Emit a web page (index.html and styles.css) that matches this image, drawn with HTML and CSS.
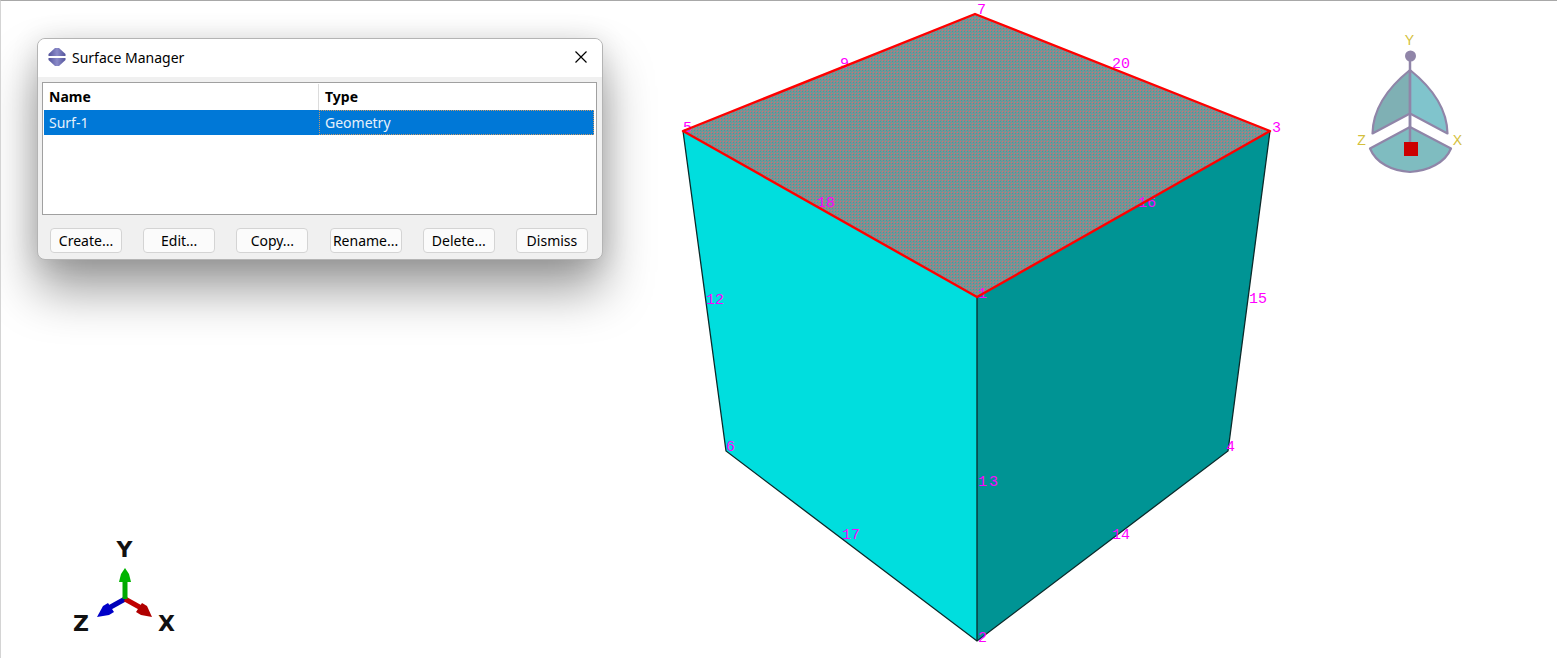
FILE: index.html
```html
<!DOCTYPE html>
<html lang="en">
<head>
<meta charset="utf-8">
<title>Surface Manager</title>
<link rel="stylesheet" href="styles.css">
</head>
<body>
<main class="viewport">
  <svg class="scene" width="1556" height="657" viewBox="1 1 1556 657" xmlns="http://www.w3.org/2000/svg">
    <defs>
      <pattern id="dither" width="3" height="3" patternUnits="userSpaceOnUse">
        <rect width="3" height="3" fill="#7d9192"/>
        <rect width="1" height="1" fill="#d66a72"/>
        <rect x="1" y="1" width="1" height="1" fill="#3d9fa0"/>
        <rect x="2" y="2" width="1" height="1" fill="#5aa0a0"/>
      </pattern>
    </defs>

    <polygon class="face-left" points="683,131 977,297 977,641 726,451"/>
    <polygon class="face-right" points="977,297 1270,131 1228,451 977,641"/>
    <polygon class="face-top" points="683,131 975,14 1270,131 977,297"/>
    <polyline class="edge" points="683,131 726,451 977,641 1228,451 1270,131"/>
    <line class="edge" x1="977" y1="297" x2="977" y2="641"/>

    <g class="labels">
      <text x="977" y="14">7</text>
      <text x="683" y="132">5</text>
      <text x="1272" y="132">3</text>
      <text x="978" y="298">1</text>
      <text x="726" y="451">6</text>
      <text x="1226" y="451">4</text>
      <text x="978" y="642">2</text>
      <text x="840" y="68">9</text>
      <text x="1112" y="68">20</text>
      <text x="817" y="207">18</text>
      <text x="1138" y="207">16</text>
      <text x="706" y="304">12</text>
      <text x="1249" y="303">15</text>
      <text class="label-wide" x="978" y="486">13</text>
      <text x="842" y="539">17</text>
      <text x="1112" y="539">14</text>
    </g>
    <polygon class="outline-red" points="683,131 975,14 1270,131 977,297"/>

    <g class="compass">
      <line class="compass-line" x1="1410" y1="56" x2="1410" y2="148"/>
      <circle class="compass-knob" cx="1410.5" cy="56" r="5.5"/>
      <path class="petal-left" d="M1410 70 C1390 86 1373 108 1372.5 133.5 L1410 113.5 Z"/>
      <path class="petal-right" d="M1410 70 C1430 86 1447 108 1447.5 133.5 L1410 113.5 Z"/>
      <path class="petal-low" d="M1410 127 L1370 148.5 C1376 163 1392 171 1410 172 C1428 171 1445 163 1451 148.5 Z"/>
      <line class="compass-line" x1="1410" y1="70" x2="1410" y2="148"/>
      <rect class="compass-red" x="1404" y="142" width="14" height="14"/>
      <text class="compass-text" x="1409.5" y="45">Y</text>
      <text class="compass-text" x="1361.5" y="145">Z</text>
      <text class="compass-text" x="1457.5" y="145">X</text>
    </g>

    <g class="triad">
      <line class="axis-blue" x1="125" y1="599" x2="107" y2="609"/>
      <polygon class="head-blue" points="97,617 103,606 108,603 114,612 109,615"/>
      <line class="axis-red" x1="125" y1="599" x2="143" y2="609"/>
      <polygon class="head-red" points="152,617 147,606 142,603 136,612 141,615"/>
      <line class="axis-green" x1="125" y1="599" x2="125" y2="579"/>
      <polygon class="head-green" points="125,568 129,574 131,582 119,582 121,574"/>
      <text class="triad-text" x="124.5" y="557">Y</text>
      <text class="triad-text" x="81" y="631">Z</text>
      <text class="triad-text" x="166.5" y="631">X</text>
    </g>
  </svg>

  <section class="dialog">
    <header class="titlebar">
      <svg class="app-icon" width="18" height="18" viewBox="0 0 18 18" xmlns="http://www.w3.org/2000/svg">
        <defs>
          <linearGradient id="iconShade" x1="0" y1="0" x2="1" y2="0">
            <stop offset="0" stop-color="#54549c"/>
            <stop offset="0.5" stop-color="#8a8ac8"/>
            <stop offset="1" stop-color="#54549c"/>
          </linearGradient>
        </defs>
        <path class="app-icon-fill" d="M7 0 H11 L17.5 6 V8 H0.5 V6 Z"/>
        <path class="app-icon-fill" d="M0.5 10 H17.5 V12 L11 18 H7 L0.5 12 Z"/>
      </svg>
      <span class="title">Surface Manager</span>
      <svg class="close" width="12" height="12" viewBox="0 0 12 12" xmlns="http://www.w3.org/2000/svg">
        <path class="close-x" d="M0.5 0.5 L11.5 11.5 M11.5 0.5 L0.5 11.5"/>
      </svg>
    </header>
    <div class="body">
      <div class="table">
        <div class="row head">
          <div class="cell name">Name</div>
          <div class="cell type">Type</div>
        </div>
        <div class="row selected">
          <div class="cell name">Surf-1</div>
          <div class="cell type">Geometry</div>
        </div>
      </div>
      <div class="buttons">
        <button class="btn">Create...</button>
        <button class="btn">Edit...</button>
        <button class="btn">Copy...</button>
        <button class="btn">Rename...</button>
        <button class="btn">Delete...</button>
        <button class="btn">Dismiss</button>
      </div>
    </div>
  </section>
</main>
</body>
</html>
```

FILE: styles.css
```css
html, body {
  margin: 0;
  padding: 0;
  background: #fff;
  overflow: hidden;
}
.viewport {
  position: relative;
  width: 1557px;
  height: 658px;
  box-sizing: border-box;
  border-top: 1px solid #a8a8a8;
  border-left: 1px solid #d4d4d4;
  background: #fff;
  overflow: hidden;
}
.scene {
  position: absolute;
  left: 0;
  top: 0;
  display: block;
}
.face-left { fill: #00dede; }
.face-right { fill: #009494; }
.face-top { fill: url(#dither); }
.edge {
  fill: none;
  stroke: #0a2a2a;
  stroke-width: 1.3;
}
.outline-red {
  fill: none;
  stroke: #ff0000;
  stroke-width: 2.4;
  stroke-linejoin: round;
}
.labels text {
  font-family: "Liberation Mono", monospace;
  font-size: 15px;
  fill: #ff00ff;
}
.labels .label-wide { letter-spacing: 2px; }
.compass-line {
  stroke: #9085a8;
  stroke-width: 2.5;
}
.compass-knob { fill: #9085a8; }
.petal-left, .petal-right, .petal-low {
  stroke: #9085a8;
  stroke-width: 2.2;
  stroke-linejoin: round;
}
.petal-left { fill: #7fb0b4; }
.petal-right { fill: #80c4cc; }
.petal-low { fill: #7fbcc0; }
.compass-red { fill: #cc0000; }
.compass-text {
  font-family: "Liberation Sans", sans-serif;
  font-size: 14px;
  fill: #d4bf3c;
  text-anchor: middle;
}
.axis-blue, .axis-red, .axis-green {
  stroke-width: 5;
}
.axis-blue { stroke: #0000b8; }
.axis-red { stroke: #c00000; }
.axis-green { stroke: #00a800; }
.head-blue { fill: #0000c8; }
.head-red { fill: #b00000; }
.head-green { fill: #00b400; }
.triad-text {
  font-family: "DejaVu Sans", sans-serif;
  font-weight: 700;
  font-size: 22px;
  fill: #111;
  text-anchor: middle;
}

.dialog {
  position: absolute;
  left: 36px;
  top: 37px;
  width: 566px;
  height: 222px;
  box-sizing: border-box;
  display: flex;
  flex-direction: column;
  border: 1px solid #b4b4b4;
  border-radius: 8px;
  background: #f0f0f0;
  box-shadow: 0 30px 50px rgba(0, 0, 0, .39), 0 2px 28px rgba(0, 0, 0, .12);
  overflow: hidden;
  font-family: "Noto Sans", sans-serif;
  font-size: 14px;
  color: #000;
}
.titlebar {
  display: flex;
  align-items: center;
  height: 38px;
  flex: none;
  padding: 0 15px 2px 10px;
  box-sizing: border-box;
  background: #fff;
}
.app-icon { display: block; flex: none; }
.app-icon-fill { fill: url(#iconShade); }
.title { margin-left: 6px; flex: 1; }
.close { display: block; flex: none; }
.close-x { stroke: #000; stroke-width: 1.2; fill: none; }
.body {
  flex: 1;
  display: flex;
  flex-direction: column;
  padding: 5px 5px 5px 4px;
}
.table {
  height: 133px;
  flex: none;
  box-sizing: border-box;
  border: 1px solid #a0a0a0;
  background: #fff;
  padding: 1px 2px 0 1px;
}
.row {
  display: flex;
}
.head {
  height: 26px;
  font-weight: 700;
  align-items: center;
}
.selected {
  height: 25px;
  background: #0078d7;
  color: #e6f1fb;
}
.cell {
  display: flex;
  align-items: center;
  box-sizing: border-box;
  padding-left: 5px;
  padding-bottom: 1px;
}
.name { width: 275px; flex: none; }
.type { flex: 1; padding-left: 6px; }
.head .name { height: 100%; border-right: 1px solid #dcdcdc; }
.selected .type { border: 1px dotted #c89a6a; padding-left: 5px; }
.buttons {
  display: flex;
  justify-content: space-between;
  padding: 13px 9px 0 8px;
}
.btn {
  width: 72px;
  height: 25px;
  padding: 0;
  box-sizing: border-box;
  border: 1px solid #d4d4d4;
  border-radius: 4px;
  background: #fbfbfb;
  font: inherit;
  color: #000;
}
```
